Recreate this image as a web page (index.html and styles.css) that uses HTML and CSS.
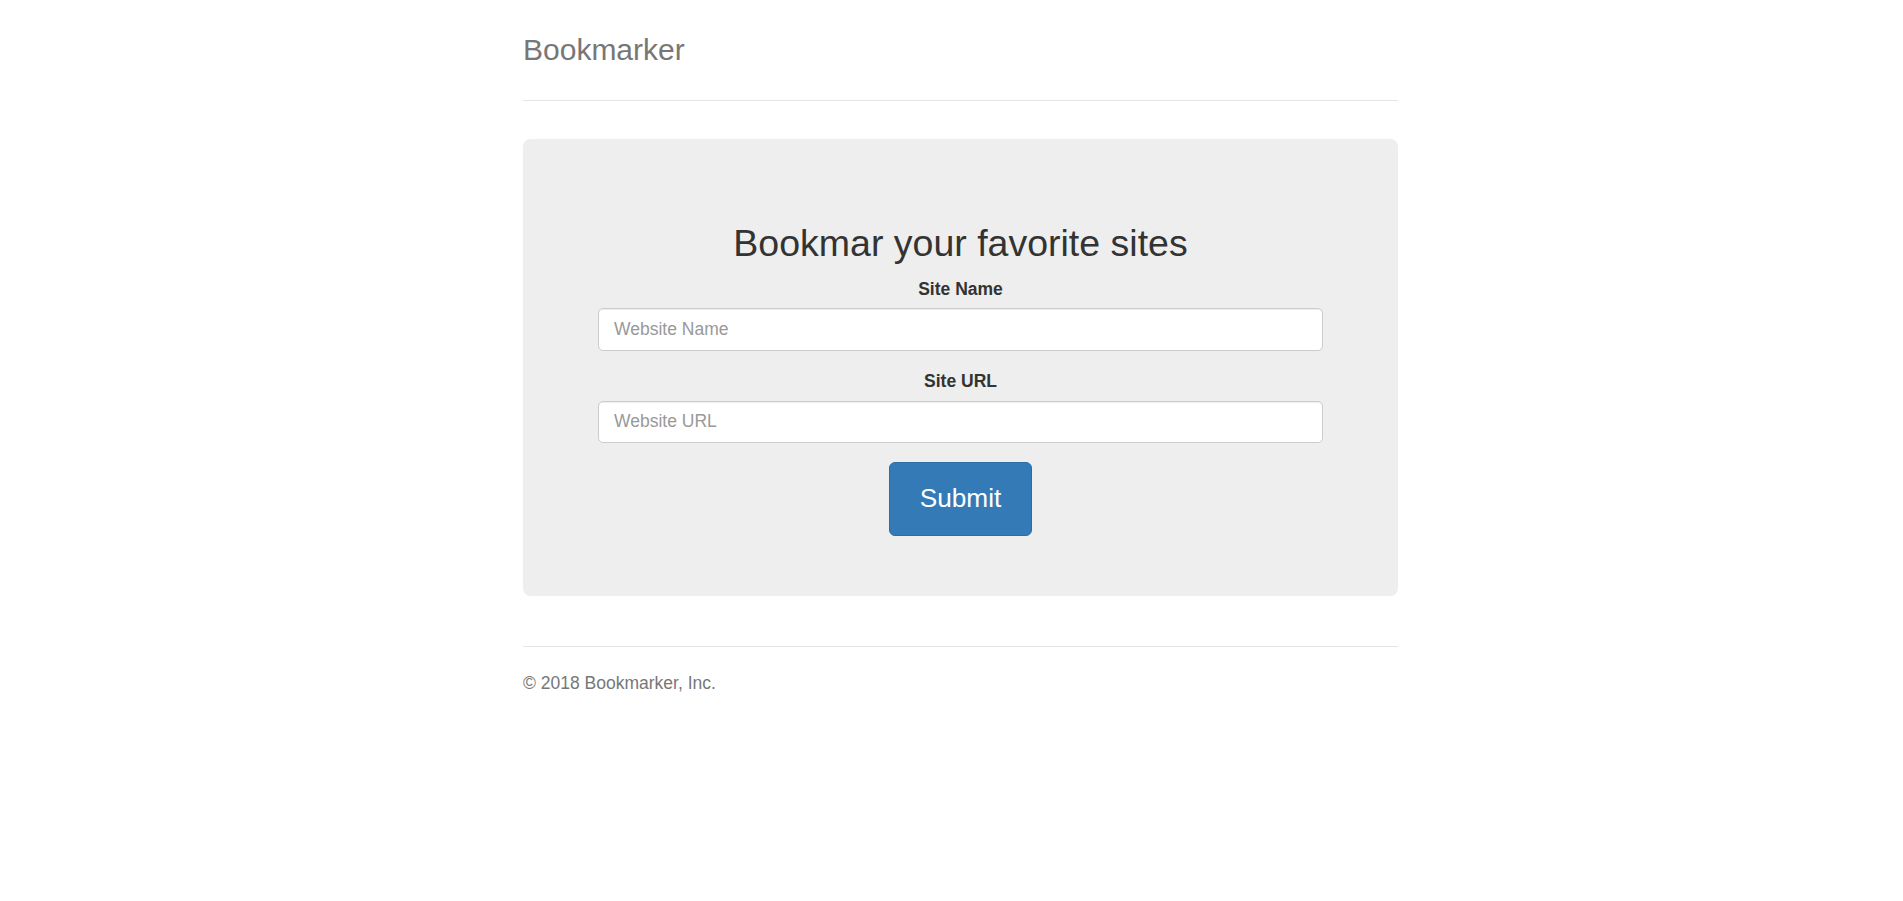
FILE: index.html
```html
<!DOCTYPE html>
<html lang="en">
<head>
<meta charset="utf-8">
<title>Bookmarker</title>
<link rel="stylesheet" href="styles.css">
</head>
<body>
<div class="container">
  <div class="header">
    <h3 class="brand">Bookmarker</h3>
  </div>
  <div class="jumbotron">
    <h2 class="title">Bookmar your favorite sites</h2>
    <form class="form">
      <div class="form-group">
        <label class="label" for="siteName">Site Name</label>
        <input class="form-control" type="text" id="siteName" placeholder="Website Name">
      </div>
      <div class="form-group">
        <label class="label" for="siteUrl">Site URL</label>
        <input class="form-control" type="text" id="siteUrl" placeholder="Website URL">
      </div>
      <button type="submit" class="btn-submit">Submit</button>
    </form>
  </div>
  <div class="marketing"></div>
  <footer class="footer">
    <p class="copy">&copy; 2018 Bookmarker, Inc.</p>
  </footer>
</div>
</body>
</html>
```
FILE: styles.css
```css
* { box-sizing: border-box; }
html, body { margin: 0; }
body {
  font-family: "Liberation Sans", Arial, sans-serif;
  font-size: 17.5px;
  line-height: 25px;
  color: #333;
  background: #fff;
  padding: 25px 0 25px 18px;
}
.container {
  width: 875px;
  margin: 0 auto;
}
.header {
  padding-bottom: 25px;
  border-bottom: 1px solid #e5e5e5;
  margin-bottom: 38px;
}
.brand {
  margin: 0;
  font-size: 30px;
  font-weight: 500;
  line-height: 50px;
  color: #777;
}
.jumbotron {
  background: #eee;
  border-radius: 7.5px;
  padding: 37.5px 75px 60px;
  text-align: center;
}
.title {
  margin: 46.5px 0 12.5px;
  font-size: 37.5px;
  font-weight: 500;
  line-height: 41.25px;
  color: #333;
}
.form-group {
  margin-bottom: 18.75px;
}
.label {
  display: block;
  font-weight: 700;
  margin-bottom: 6.25px;
  line-height: 25px;
}
.form-control {
  display: block;
  width: 100%;
  height: 42.5px;
  padding: 7.5px 15px;
  font-family: inherit;
  font-size: 17.5px;
  line-height: 25px;
  color: #555;
  background: #fff;
  border: 1px solid #ccc;
  border-radius: 5px;
  box-shadow: inset 0 1px 1px rgba(0,0,0,.075);
  outline: none;
}
.form-control::placeholder { color: #999; }
.btn-submit {
  display: inline-block;
  font-family: inherit;
  font-size: 26.25px;
  line-height: 35px;
  padding: 18.5px 30px;
  color: #fff;
  background: #337ab7;
  border: 1px solid #2e6da4;
  border-radius: 6px;
  cursor: pointer;
  vertical-align: top;
}
.marketing {
  margin: 50px 0;
}
.footer {
  padding-top: 23.75px;
  border-top: 1px solid #e5e5e5;
  color: #777;
}
.copy {
  margin: 0 0 12.5px;
}
```
